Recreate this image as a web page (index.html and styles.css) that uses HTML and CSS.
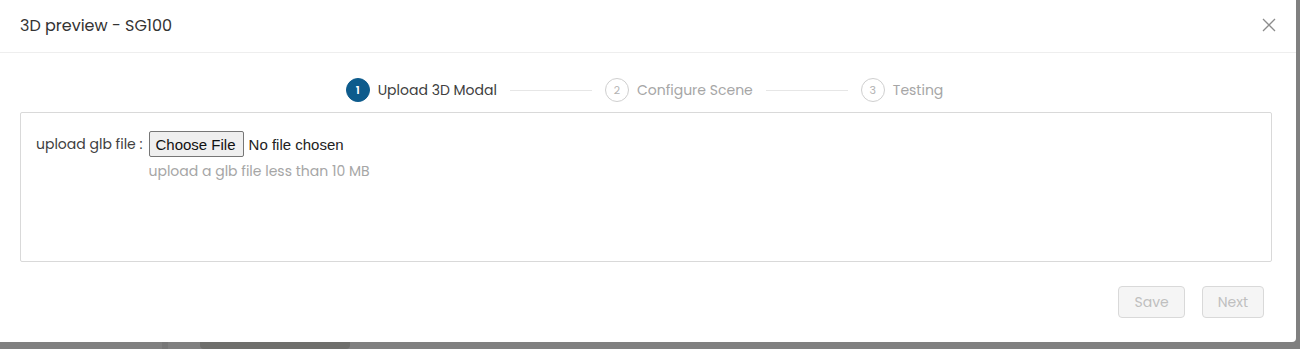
FILE: index.html
```html
<!DOCTYPE html>
<html lang="en">

<head>
    <meta charset="UTF-8">
    <meta name="viewport" content="width=device-width, initial-scale=1.0">
    <title>3D preview - SG100</title>
    <link rel="stylesheet" href="styles.css">
</head>

<body>

    <div class="backdrop">
        <div class="modal">
            <div class="modal-header">
                <h3 class="modal-title">3D preview - SG100</h3>
                <span class="close-btn">
                    <svg width="14" height="14" viewBox="0 0 14 14">
                        <path d="M1 1 L13 13 M13 1 L1 13" stroke="#8c8c8c" stroke-width="1.3" fill="none" />
                    </svg>
                </span>
            </div>

            <div class="steps">
                <div class="step active">
                    <span class="step-num">1</span>
                    <span class="step-title">Upload 3D Modal</span>
                </div>
                <div class="step-line"></div>
                <div class="step">
                    <span class="step-num">2</span>
                    <span class="step-title">Configure Scene</span>
                </div>
                <div class="step-line"></div>
                <div class="step">
                    <span class="step-num">3</span>
                    <span class="step-title">Testing</span>
                </div>
            </div>

            <div class="upload-box">
                <div class="form-row">
                    <label class="form-label">upload glb file :</label>
                    <div class="form-field">
                        <input type="file" class="file-input">
                        <div class="hint">upload a glb file less than 10 MB</div>
                    </div>
                </div>
            </div>

            <div class="modal-footer">
                <button class="btn" disabled>Save</button>
                <button class="btn" disabled>Next</button>
            </div>
        </div>

        <!-- page behind the mask -->
        <div class="behind">
            <span class="behind-a"></span>
            <span class="behind-b"></span>
        </div>
    </div>

</body>

</html>
```

FILE: styles.css
```css
body {
    margin: 0;
    font-family: 'Poppins', 'Open Sans', sans-serif;
    background-color: #808080;
    color: #333;
    height: 349px;
    overflow: hidden;
}

.backdrop {
    display: flex;
    flex-direction: column;
}

.modal {
    width: 1296px;
    height: 342px;
    background-color: white;
    border-radius: 0 0 4px 0;
    display: flex;
    flex-direction: column;
}

.modal-header {
    display: flex;
    align-items: center;
    justify-content: space-between;
    height: 52px;
    padding: 0 20px;
    border-bottom: 1px solid #eeeeee;
}

.modal-title {
    margin: 0;
    font-size: 16px;
    font-weight: 400;
    color: #333;
    padding-bottom: 2px;
}

.close-btn {
    display: flex;
    margin-top: -2px;
}

/* Steps */
.steps {
    display: flex;
    align-items: center;
    justify-content: center;
    margin-top: 25px;
    margin-bottom: 10px;
    padding-right: 7px;
}

.step {
    display: flex;
    align-items: center;
    gap: 8px;
    font-size: 14px;
    color: #a6a6a6;
}

.step-num {
    width: 22px;
    height: 22px;
    border: 1px solid #cfcfcf;
    border-radius: 50%;
    display: flex;
    align-items: center;
    justify-content: center;
    font-size: 11px;
    color: #b3b3b3;
}

.step.active {
    color: #404040;
}

.step.active .step-num {
    background-color: #0d5b8c;
    border-color: #0d5b8c;
    color: white;
    font-weight: 600;
}

.step-line {
    width: 82px;
    height: 1px;
    background-color: #e6e6e6;
    margin: 0 13px;
}

/* Upload box */
.upload-box {
    margin: 0 24px 0 20px;
    height: 150px;
    box-sizing: border-box;
    border: 1px solid #d9d9d9;
    border-radius: 2px;
    padding: 18px 15px 0;
}

.form-row {
    display: flex;
    align-items: flex-start;
}

.form-label {
    font-size: 14px;
    line-height: 26px;
    color: #404040;
    margin-right: 6px;
}

.file-input {
    font-family: 'Liberation Sans', Arial, sans-serif;
    font-size: 15px;
    color: #222;
}

.file-input::file-selector-button {
    height: 26px;
    padding: 0 7px 0 6px;
    margin-right: 5px;
    font-family: 'Liberation Sans', Arial, sans-serif;
    font-size: 15px;
    color: #111;
    background-color: #efefef;
    border: 1px solid #767676;
    border-radius: 2px;
}

.hint {
    margin-top: 4px;
    font-size: 14px;
    color: #a6a6a6;
}

/* Footer */
.modal-footer {
    display: flex;
    justify-content: flex-end;
    gap: 17px;
    margin-top: 24px;
    padding-right: 32px;
}

.btn {
    height: 32px;
    padding: 0 15px;
    font-family: 'Poppins', 'Open Sans', sans-serif;
    font-size: 14px;
    background-color: #f5f5f5;
    border: 1px solid #d9d9d9;
    border-radius: 4px;
    color: #bfbfbf;
}

.behind {
    display: flex;
    height: 7px;
    padding-left: 162px;
}

.behind-a {
    width: 6px;
    background-color: #787878;
}

.behind-b {
    width: 150px;
    background-color: #6f6f6c;
    border-radius: 0 0 4px 4px;
    margin-left: 32px;
}
```
